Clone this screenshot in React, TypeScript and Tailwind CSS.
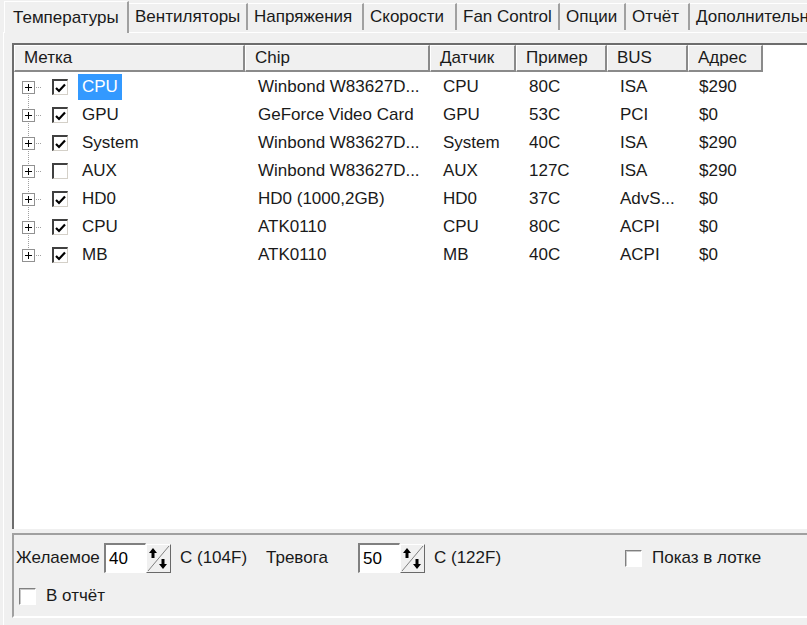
import React from 'react';

const tabs = [
  { label: 'Температуры', w: 125 },
  { label: 'Вентиляторы', w: 119 },
  { label: 'Напряжения', w: 116 },
  { label: 'Скорости', w: 93 },
  { label: 'Fan Control', w: 103 },
  { label: 'Опции', w: 66 },
  { label: 'Отчёт', w: 64 },
  { label: 'Дополнительно', w: 130 },
];

const columns = [
  { label: 'Метка', w: 231 },
  { label: 'Chip', w: 185 },
  { label: 'Датчик', w: 86 },
  { label: 'Пример', w: 91 },
  { label: 'BUS', w: 81 },
  { label: 'Адрес', w: 75 },
];

const rows = [
  { label: 'CPU', checked: true, chip: 'Winbond W83627D...', sensor: 'CPU', value: '80C', bus: 'ISA', addr: '$290' },
  { label: 'GPU', checked: true, chip: 'GeForce Video Card', sensor: 'GPU', value: '53C', bus: 'PCI', addr: '$0' },
  { label: 'System', checked: true, chip: 'Winbond W83627D...', sensor: 'System', value: '40C', bus: 'ISA', addr: '$290' },
  { label: 'AUX', checked: false, chip: 'Winbond W83627D...', sensor: 'AUX', value: '127C', bus: 'ISA', addr: '$290' },
  { label: 'HD0', checked: true, chip: 'HD0 (1000,2GB)', sensor: 'HD0', value: '37C', bus: 'AdvS...', addr: '$0' },
  { label: 'CPU', checked: true, chip: 'ATK0110', sensor: 'CPU', value: '80C', bus: 'ACPI', addr: '$0' },
  { label: 'MB', checked: true, chip: 'ATK0110', sensor: 'MB', value: '40C', bus: 'ACPI', addr: '$0' },
];

const TreeNode = ({ first, last }: { first: boolean; last: boolean }) => (
  <svg width="30" height="28" viewBox="0 0 30 28" className="shrink-0">
    {!first && <line x1="6.5" y1="0" x2="6.5" y2="8" stroke="#a0a0a0" strokeDasharray="1 1" />}
    {!last && <line x1="6.5" y1="20" x2="6.5" y2="28" stroke="#a0a0a0" strokeDasharray="1 1" />}
    <line x1="12" y1="14.5" x2="20" y2="14.5" stroke="#a0a0a0" strokeDasharray="1 1" />
    <rect x="0.5" y="8.5" width="12" height="12" fill="#fff" stroke="#919191" />
    <line x1="3" y1="14.5" x2="10" y2="14.5" stroke="#000" />
    <line x1="6.5" y1="11" x2="6.5" y2="18" stroke="#000" />
  </svg>
);

const CheckBox = ({ checked }: { checked: boolean }) => (
  <div className="w-[16px] h-[16px] shrink-0 bg-white border-t-2 border-l-2 border-t-[#404040] border-l-[#404040] border-b border-r border-b-[#d4d0c8] border-r-[#d4d0c8] flex items-center justify-center">
    {checked && (
      <svg width="11" height="10" viewBox="0 0 11 10">
        <path d="M1 5 L4 8 L10 1.5" fill="none" stroke="#000" strokeWidth="2.2" />
      </svg>
    )}
  </div>
);

const FlatCheck = () => (
  <div className="w-[17px] h-[17px] shrink-0 bg-white border-t border-l border-t-[#808080] border-l-[#808080] border-b border-r border-b-white border-r-white shadow-[inset_1px_1px_0_#c8c8c8]" />
);

const Spin = () => (
  <div className="w-[25px] h-[29px] shrink-0 bg-[#f0f0f0] border border-t-white border-l-white border-b-[#696969] border-r-[#696969]">
    <svg width="23" height="27" viewBox="0 0 23 27">
      <line x1="1" y1="26" x2="22" y2="1" stroke="#808080" />
      <path d="M6 3 L10 8 L7.5 8 L7.5 13 L4.5 13 L4.5 8 L2 8 Z" fill="#000" />
      <path d="M16 24 L12 19 L14.5 19 L14.5 14 L17.5 14 L17.5 19 L20 19 Z" fill="#000" />
    </svg>
  </div>
);

const NumInput = ({ value }: { value: string }) => (
  <div className="flex items-center">
    <div className="w-[42px] h-[30px] bg-white border-t-2 border-l-2 border-t-[#808080] border-l-[#808080] border-b border-r border-b-white border-r-white flex items-center pl-[3px] text-black">
      {value}
    </div>
    <Spin />
  </div>
);

export default function App() {
  return (
    <div
      className="w-[807px] h-[625px] overflow-hidden bg-[#f0f0f0] text-[17px] text-[#1a1a1a] flex flex-col"
      style={{ fontFamily: '"Liberation Sans", Arial, sans-serif' }}
    >
      {/* tabs */}
      <div className="flex items-end h-[32px] pl-[4px] shrink-0">
        {tabs.map((t, i) =>
          i === 0 ? (
            <div
              key={t.label}
              style={{ width: t.w }}
              className="h-[32px] shrink-0 bg-[#f0f0f0] border-t border-l border-white border-r-2 border-r-[#a0a0a0] flex items-center pl-[8px] relative z-10 -mb-px"
            >
              {t.label}
            </div>
          ) : (
            <div
              key={t.label}
              style={{ width: t.w }}
              className="h-[27px] shrink-0 bg-[#f0f0f0] border-t border-white border-r-2 border-r-[#a0a0a0] flex items-center pl-[6px] overflow-hidden whitespace-nowrap mb-[2px]"
            >
              {t.label}
            </div>
          )
        )}
      </div>

      {/* tab page */}
      <div className="flex-1 border-t border-l border-white ml-[3px] pl-[8px] pt-[10px] flex flex-col">
        {/* list view */}
        <div className="w-[820px] h-[486px] shrink-0 bg-white border-t-2 border-l-2 border-t-[#6d6d6d] border-l-[#6d6d6d] flex flex-col">
          <div className="flex h-[27px] shrink-0">
            {columns.map((c) => (
              <div
                key={c.label}
                style={{ width: c.w }}
                className="h-full shrink-0 bg-[#f0f0f0] border-t border-l border-white border-r-2 border-b-2 border-r-[#8a8a8a] border-b-[#8a8a8a] flex items-center pl-[9px] whitespace-nowrap"
              >
                {c.label}
              </div>
            ))}
            <div className="flex-1 bg-white" />
          </div>
          <div className="flex flex-col pt-[1px]">
            {rows.map((r, i) => (
              <div key={i} className="flex h-[28px] items-center whitespace-nowrap">
                <div className="w-[231px] shrink-0 flex items-center pl-[8px]">
                  <TreeNode first={i === 0} last={i === rows.length - 1} />
                  <CheckBox checked={r.checked} />
                  <div
                    className={
                      i === 0
                        ? 'ml-[10px] h-[26px] px-[4px] flex items-center bg-[#3399ff] text-white'
                        : 'ml-[10px] h-[26px] px-[4px] flex items-center'
                    }
                  >
                    {r.label}
                  </div>
                </div>
                <div className="w-[185px] shrink-0 pl-[13px] overflow-hidden">{r.chip}</div>
                <div className="w-[86px] shrink-0 pl-[13px]">{r.sensor}</div>
                <div className="w-[91px] shrink-0 pl-[13px]">{r.value}</div>
                <div className="w-[81px] shrink-0 pl-[13px]">{r.bus}</div>
                <div className="w-[75px] shrink-0 pl-[11px]">{r.addr}</div>
              </div>
            ))}
          </div>
        </div>

        {/* options group */}
        <div className="mt-[4px] h-[85px] shrink-0 border-t-2 border-l-2 border-t-[#a0a0a0] border-l-[#a0a0a0] border-b-2 border-b-white flex flex-col pl-[2px] pt-[8px]">
          <div className="flex items-center h-[30px]">
            <span className="w-[88px] shrink-0">Желаемое</span>
            <NumInput value="40" />
            <span className="ml-[9px] w-[86px] shrink-0">C (104F)</span>
            <span className="w-[92px] shrink-0">Тревога</span>
            <NumInput value="50" />
            <span className="ml-[9px] w-[191px] shrink-0">C (122F)</span>
            <FlatCheck />
            <span className="ml-[10px]">Показ в лотке</span>
          </div>
          <div className="flex items-center h-[28px] mt-[9px] pl-[3px]">
            <FlatCheck />
            <span className="ml-[10px]">В отчёт</span>
          </div>
        </div>
      </div>
    </div>
  );
}
